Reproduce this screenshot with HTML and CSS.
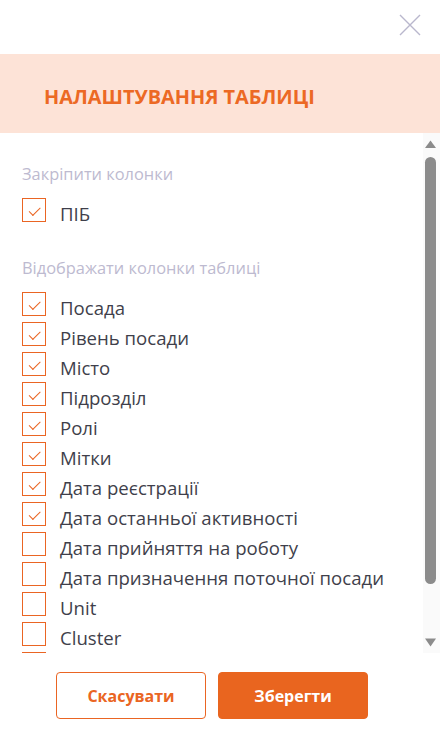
FILE: index.html
```html
<!DOCTYPE html>
<html lang="uk">
<head>
    <meta charset="UTF-8">
    <meta name="viewport" content="width=device-width, initial-scale=1.0">
    <title>Налаштування таблиці</title>
    <link rel="stylesheet" href="styles.css">
</head>
<body>
    <div class="modal">
        <div class="modal-top">
            <button class="close-btn" aria-label="Закрити">
                <svg width="22" height="22" viewBox="0 0 22 22">
                    <path d="M1 1 L21 21 M21 1 L1 21" stroke="#b9b7cd" stroke-width="1.4" fill="none"/>
                </svg>
            </button>
        </div>

        <div class="modal-header">
            <h2>НАЛАШТУВАННЯ ТАБЛИЦІ</h2>
        </div>

        <div class="modal-body">
            <div class="column-list">
                <div class="group">
                    <p class="group-title">Закріпити колонки</p>
                    <label class="option"><input type="checkbox" checked><span>ПІБ</span></label>
                </div>

                <div class="group">
                    <p class="group-title">Відображати колонки таблиці</p>
                    <label class="option"><input type="checkbox" checked><span>Посада</span></label>
                    <label class="option"><input type="checkbox" checked><span>Рівень посади</span></label>
                    <label class="option"><input type="checkbox" checked><span>Місто</span></label>
                    <label class="option"><input type="checkbox" checked><span>Підрозділ</span></label>
                    <label class="option"><input type="checkbox" checked><span>Ролі</span></label>
                    <label class="option"><input type="checkbox" checked><span>Мітки</span></label>
                    <label class="option"><input type="checkbox" checked><span>Дата реєстрації</span></label>
                    <label class="option"><input type="checkbox" checked><span>Дата останньої активності</span></label>
                    <label class="option"><input type="checkbox"><span>Дата прийняття на роботу</span></label>
                    <label class="option"><input type="checkbox"><span>Дата призначення поточної посади</span></label>
                    <label class="option"><input type="checkbox"><span>Unit</span></label>
                    <label class="option"><input type="checkbox"><span>Cluster</span></label>
                    <label class="option"><input type="checkbox"><span>Team</span></label>
                </div>
            </div>

            <!-- смуга прокрутки -->
            <div class="scrollbar">
                <svg class="scroll-arrow" width="11" height="8" viewBox="0 0 11 8">
                    <polygon points="5.5,0.5 11,8 0,8" fill="#8b8b8b"/>
                </svg>
                <div class="scroll-thumb"></div>
                <svg class="scroll-arrow down" width="11" height="9" viewBox="0 0 11 9">
                    <polygon points="0,0.5 11,0.5 5.5,8.5" fill="#8b8b8b"/>
                </svg>
            </div>
        </div>

        <div class="modal-footer">
            <button class="btn btn-outline">Скасувати</button>
            <button class="btn btn-primary">Зберегти</button>
        </div>
    </div>
</body>
</html>
```

FILE: styles.css
```css
body {
    font-family: "Open Sans", "Noto Sans", sans-serif;
    background-color: #fff;
    margin: 0;
    padding: 0;
}
.modal {
    width: 440px;
    height: 742px;
    background: #fff;
    display: flex;
    flex-direction: column;
}
.modal-top {
    height: 54px;
    display: flex;
    justify-content: flex-end;
}
.close-btn {
    background: none;
    border: none;
    padding: 0;
    margin: 14px 19px 0 0;
    width: 22px;
    height: 22px;
    cursor: pointer;
}
.modal-header {
    height: 79px;
    box-sizing: border-box;
    background-color: #fde3d7;
    display: flex;
    align-items: center;
    padding: 5px 0 0 44px;
}
.modal-header h2 {
    margin: 0;
    font-size: 19.9px;
    font-weight: 700;
    color: #ec6924;
}
.modal-body {
    height: 520px;
    display: flex;
}
.column-list {
    flex: 1;
    overflow: hidden;
    padding: 31px 0 0 22px;
}
.scrollbar {
    width: 17px;
    background: #fafafa;
    display: flex;
    flex-direction: column;
    padding: 7px 0 6px;
    box-sizing: border-box;
}
.scroll-arrow {
    display: block;
    margin-left: 2px;
}
.scroll-arrow.down {
    margin-top: auto;
}
.scroll-thumb {
    width: 11px;
    height: 427px;
    margin: 9px 0 0 2px;
    background: #8b8b8b;
    border-radius: 6px;
}
.group {
    margin-bottom: 30px;
}
.group:last-child {
    margin-bottom: 0;
}
.group-title {
    margin: 0 0 14px;
    font-size: 16.4px;
    line-height: 20px;
    color: #bdbad0;
}
.option {
    display: flex;
    align-items: flex-start;
    height: 30px;
    cursor: pointer;
}
.option input {
    appearance: none;
    -webkit-appearance: none;
    width: 24px;
    height: 24px;
    margin: 0;
    border: 1.5px solid #ea6523;
    box-sizing: border-box;
    background: #fff;
    flex-shrink: 0;
}
.option input:checked::after {
    content: "";
    display: block;
    width: 10px;
    height: 4.5px;
    margin: 7.5px auto 0;
    border-left: 1.8px solid #ea6523;
    border-bottom: 1.8px solid #ea6523;
    transform: rotate(-45deg);
}
.option span {
    margin-left: 14px;
    padding-top: 4px;
    font-size: 18.6px;
    line-height: 24px;
    color: #3f3f4b;
    white-space: nowrap;
}
.modal-footer {
    flex: 1;
    display: flex;
    justify-content: center;
    align-items: flex-start;
    gap: 12px;
    padding: 19px 16px 0 0;
}
.btn {
    width: 150px;
    height: 47px;
    border-radius: 4px;
    font-family: "Open Sans", "Noto Sans", sans-serif;
    font-size: 16px;
    font-weight: 700;
    cursor: pointer;
}
.btn-outline {
    background: #fff;
    border: 1px solid #ea6523;
    color: #ea6523;
}
.btn-primary {
    background: #e9651f;
    border: 1px solid #e9651f;
    color: #fff;
}
```
